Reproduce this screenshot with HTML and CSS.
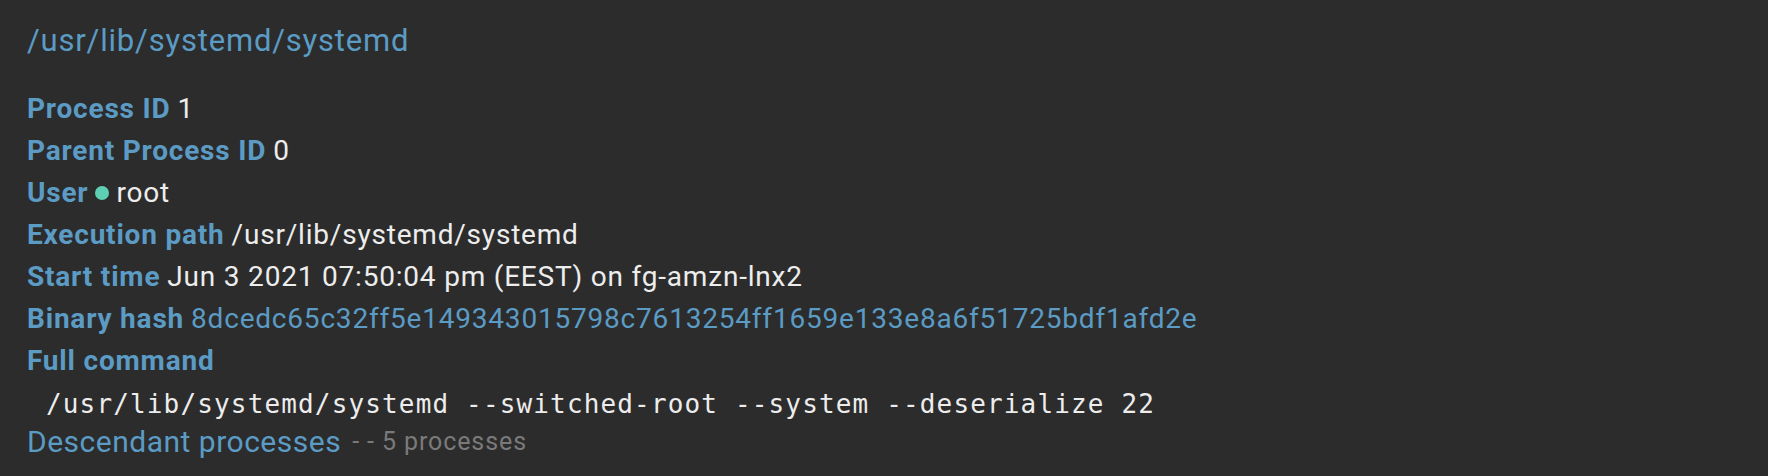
FILE: index.html
```html
<!DOCTYPE html>
<html lang="en">
<head>
  <meta charset="UTF-8" />
  <title>Process details</title>
  <link rel="stylesheet" href="styles.css">
</head>
<body>
  <div class="process">
    <a class="title" href="#">/usr/lib/systemd/systemd</a>

    <div class="fields">
      <div class="row"><span class="label">Process ID</span> 1</div>
      <div class="row"><span class="label">Parent Process ID</span> 0</div>
      <div class="row"><span class="label">User</span> <span class="dot"></span> root</div>
      <div class="row"><span class="label">Execution path</span> /usr/lib/systemd/systemd</div>
      <div class="row"><span class="label">Start time</span> Jun 3 2021 07:50:04 pm (EEST) on fg-amzn-lnx2</div>
      <div class="row"><span class="label">Binary hash</span> <span class="hash">8dcedc65c32ff5e149343015798c7613254ff1659e133e8a6f51725bdf1afd2e</span></div>
      <div class="row"><span class="label">Full command</span></div>
      <pre class="command">/usr/lib/systemd/systemd --switched-root --system --deserialize 22</pre>
      <div class="row">
        <a class="link" href="#">Descendant processes</a>
        <span class="muted">- - 5 processes</span>
      </div>
    </div>
  </div>
</body>
</html>
```

FILE: styles.css
```css
body {
  margin: 0;
  background-color: #2c2c2c;
  font-family: Roboto, "Liberation Sans", sans-serif;
  color: #ededed;
}
.process {
  padding: 21px 27px;
}
.title {
  display: block;
  font-size: 31px;
  letter-spacing: 0.8px;
  color: #5b9bc4;
  text-decoration: none;
  line-height: 40px;
  margin-bottom: 27px;
}
.row {
  font-size: 28px;
  letter-spacing: 0.8px;
  line-height: 42px;
  display: flex;
  align-items: center;
  gap: 7px;
}
.label {
  font-weight: bold;
  color: #5b9bc4;
}
.dot {
  width: 14px;
  height: 14px;
  border-radius: 50%;
  background: #5ecfb3;
}
.hash {
  color: #5b9bc4;
}
.command {
  margin: 2px 0 -3px;
  padding-left: 19px;
  font-family: "DejaVu Sans Mono", monospace;
  font-size: 26px;
  letter-spacing: 1.15px;
  line-height: 40px;
  color: #ededed;
}
.link {
  color: #5b9bc4;
  text-decoration: none;
  font-size: 30px;
  letter-spacing: 0.5px;
}
.muted {
  color: #7a7a7a;
  font-size: 25px;
  letter-spacing: 0.9px;
  margin-left: 4px;
}
```
